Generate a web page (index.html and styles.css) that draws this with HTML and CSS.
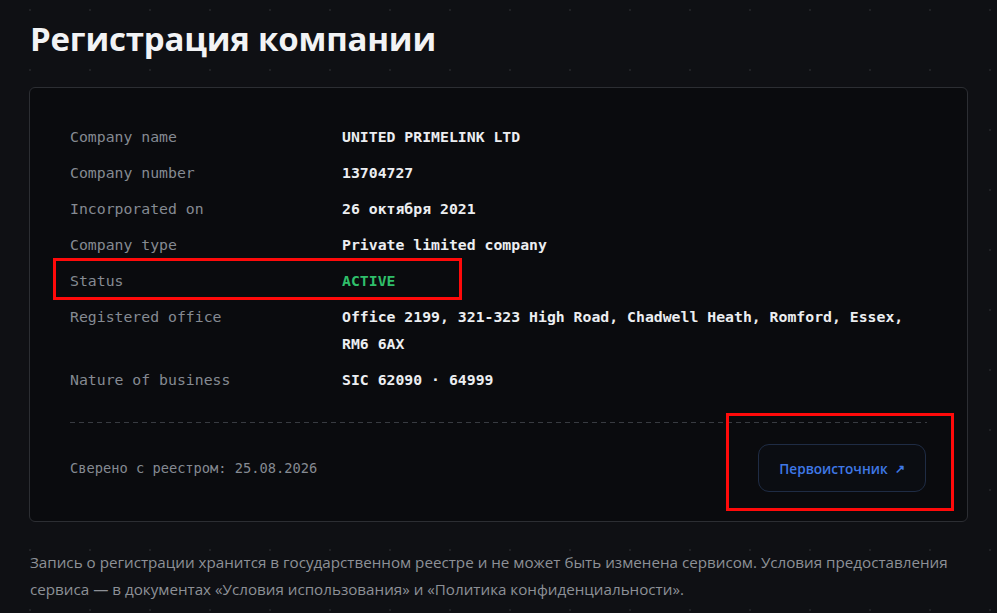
FILE: index.html
```html
<!DOCTYPE html>
<html lang="ru">
<head>
<meta charset="utf-8">
<title>Регистрация компании</title>
<link rel="stylesheet" href="styles.css">
</head>
<body>
<main class="page">
  <h1 class="title">Регистрация компании</h1>
  <section class="card">
    <dl class="rows">
      <dt>Company name</dt><dd>UNITED PRIMELINK LTD</dd>
      <dt>Company number</dt><dd>13704727</dd>
      <dt>Incorporated on</dt><dd>26 октября 2021</dd>
      <dt>Company type</dt><dd>Private limited company</dd>
      <dt>Status</dt><dd class="active">ACTIVE</dd>
      <dt>Registered office</dt><dd>Office 2199, 321-323 High Road, Chadwell Heath, Romford, Essex, RM6 6AX</dd>
      <dt>Nature of business</dt><dd>SIC 62090 · 64999</dd>
    </dl>
    <div class="divider"></div>
    <div class="footer">
      <span class="checked">Сверено с реестром: 25.08.2026</span>
      <a class="source" href="#">Первоисточник <span class="arrow">↗</span></a>
    </div>
    <div class="mark mark-status"></div>
    <div class="mark mark-source"></div>
  </section>
  <p class="note">Запись о регистрации хранится в государственном реестре и не может быть изменена сервисом. Условия предоставления сервиса — в документах «Условия использования» и «Политика конфиденциальности».</p>
</main>
</body>
</html>
```

FILE: styles.css
```css
html, body {
  margin: 0;
  padding: 0;
}
body {
  background-color: #0f1014;
  background-image: radial-gradient(circle, rgba(255,255,255,0.07) 1px, transparent 1.5px);
  background-size: 60px 60px;
  background-position: 0 -20px;
  width: 997px;
  height: 613px;
  overflow: hidden;
  font-family: "Open Sans", "Noto Sans", sans-serif;
}
.page {
  padding: 16px 29px 0 29px;
}
.title {
  margin: 0 0 0 1px;
  font-size: 33px;
  line-height: 46px;
  font-weight: 700;
  color: #f2f3f5;
  letter-spacing: -0.2px;
}
.card {
  position: relative;
  margin-top: 25px;
  background: #0a0b0e;
  border: 1px solid #2c2e33;
  border-radius: 6px;
  padding: 35px 40px 29px 40px;
}
.rows {
  display: grid;
  grid-template-columns: 272px 1fr;
  row-gap: 9px;
  margin: 0;
  font-family: "DejaVu Sans Mono", "Liberation Mono", monospace;
  font-size: 14.8px;
  line-height: 27px;
}
.rows dt {
  color: #858a92;
}
.rows dd {
  margin: 0;
  color: #eceef1;
  font-weight: 700;
}
.rows dd.active {
  color: #2fbf6a;
}
.divider {
  margin-top: 29px;
  height: 1px;
  background: repeating-linear-gradient(to right, #383b41 0 5px, transparent 5px 9px);
}
.footer {
  margin-top: 21px;
  display: flex;
  align-items: center;
  justify-content: space-between;
}
.checked {
  font-family: "DejaVu Sans Mono", "Liberation Mono", monospace;
  font-size: 13.7px;
  color: #858a92;
}
.source {
  display: flex;
  align-items: center;
  justify-content: center;
  width: 166px;
  height: 46px;
  border: 1px solid #1f2c44;
  border-radius: 11px;
  background: #0b0d12;
  color: #3f78e6;
  font-size: 13.6px;
  font-weight: 600;
  text-decoration: none;
  margin-right: 1px;
}
.arrow {
  margin-left: 7px;
  font-size: 12px;
}
.mark {
  position: absolute;
  border: 3px solid #ff0a0a;
  box-sizing: border-box;
}
.mark-status {
  left: 23px;
  top: 170px;
  width: 409px;
  height: 42px;
}
.mark-source {
  left: 696px;
  top: 325px;
  width: 228px;
  height: 98px;
}
.note {
  margin: 27px 0 0 1px;
  font-size: 15.2px;
  line-height: 27px;
  color: #8d9097;
  width: 935px;
}
```
